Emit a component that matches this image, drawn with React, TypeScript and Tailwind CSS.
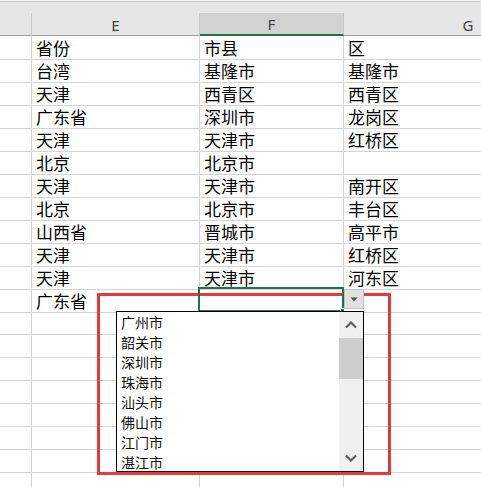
import React from 'react';

const rows: string[][] = [
  ['省份', '市县', '区'],
  ['台湾', '基隆市', '基隆市'],
  ['天津', '西青区', '西青区'],
  ['广东省', '深圳市', '龙岗区'],
  ['天津', '天津市', '红桥区'],
  ['北京', '北京市', ''],
  ['天津', '天津市', '南开区'],
  ['北京', '北京市', '丰台区'],
  ['山西省', '晋城市', '高平市'],
  ['天津', '天津市', '红桥区'],
  ['天津', '天津市', '河东区'],
  ['广东省', '', ''],
];

const options = ['广州市', '韶关市', '深圳市', '珠海市', '汕头市', '佛山市', '江门市', '湛江市'];

const cjk = { fontFamily: '"Noto Sans CJK SC", "Noto Sans", sans-serif' };

const Chevron = ({ up }: { up?: boolean }) => (
  <svg width="12" height="8" viewBox="0 0 12 8">
    <path
      d={up ? 'M1 6.5 L6 1.5 L11 6.5' : 'M1 1.5 L6 6.5 L11 1.5'}
      fill="none"
      stroke="#5f5f5f"
      strokeWidth="2.2"
    />
  </svg>
);

export default function App() {
  const allRows = [...rows, ...Array.from({ length: 8 }, () => ['', '', ''])];

  return (
    <div className="relative w-[481px] h-[487px] overflow-hidden bg-white" style={cjk}>
      {/* top band */}
      <div className="h-[1px] bg-[#f3f3f3]" />
      <div className="h-[1px] bg-[#c8c8c8]" />
      <div className="h-[11px] bg-[#e6e6e6]" />

      {/* column headers */}
      <div
        className="grid grid-cols-[32px_168px_144px_248px] h-[23px] bg-[#e6e6e6] text-[15px] text-[#444]"
        style={{ fontFamily: '"Noto Sans", sans-serif' }}
      >
        <div className="border-r border-b border-[#c6c6c6] border-b-[#9e9e9e]" />
        <div className="border-r border-b border-[#c6c6c6] border-b-[#9e9e9e] flex items-end justify-center leading-[20px]">E</div>
        <div className="border-r border-[#c6c6c6] bg-[#d2d2d2] border-b-2 border-b-[#217346] flex items-end justify-center leading-[20px]">F</div>
        <div className="border-b border-[#9e9e9e] flex items-end justify-center leading-[20px]">G</div>
      </div>

      {/* cells */}
      {allRows.map((r, i) => (
        <div key={i} className="grid grid-cols-[32px_168px_144px_248px] h-[23px] text-[17px] text-black">
          <div className="border-r border-b border-[#d4d4d4]" />
          <div className="border-r border-b border-[#d4d4d4] pl-[4px] leading-[23px] whitespace-nowrap">{r[0]}</div>
          <div className="border-r border-b border-[#d4d4d4] pl-[4px] leading-[23px] whitespace-nowrap">{r[1]}</div>
          <div className="border-b border-[#d4d4d4] pl-[4px] leading-[23px] whitespace-nowrap">{r[2]}</div>
        </div>
      ))}

      {/* red highlight box */}
      <div className="absolute left-[97px] top-[293px] w-[294px] h-[182px] border-[3px] border-[#e8383d]" />

      {/* active cell */}
      <div className="absolute left-[198px] top-[287px] w-[146px] h-[25px] border-2 border-[#217346]" />
      <div className="absolute left-[340px] top-[308px] w-[5px] h-[5px] bg-[#217346] border border-white" />

      {/* dropdown button */}
      <div className="absolute left-[344px] top-[289px] w-[20px] h-[20px] bg-[#e1e1e1] border border-[#c2c2c2] flex items-center justify-center">
        <svg width="8" height="5" viewBox="0 0 8 5">
          <path d="M0.5 0.5 L7.5 0.5 L4 4.5 Z" fill="#555" />
        </svg>
      </div>

      {/* dropdown list */}
      <div className="absolute left-[116px] top-[311px] w-[248px] h-[161px] bg-white border border-black flex text-[14px] text-[#111]">
        <div className="flex-1 pl-[4px]">
          {options.map((o) => (
            <div key={o} className="h-[20px] leading-[20px]">{o}</div>
          ))}
        </div>
        <div className="w-[24px] bg-[#f0f0f0] flex flex-col">
          <div className="h-[26px] flex items-center justify-center">
            <Chevron up />
          </div>
          <div className="h-[41px] bg-[#cdcdcd]" />
          <div className="flex-1" />
          <div className="h-[26px] flex items-center justify-center">
            <Chevron />
          </div>
        </div>
      </div>
    </div>
  );
}
